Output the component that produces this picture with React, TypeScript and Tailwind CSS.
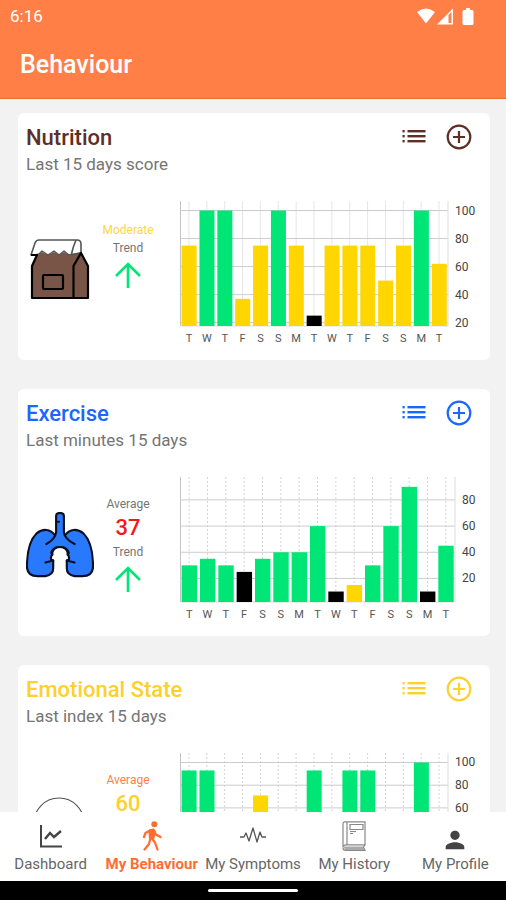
import type { ReactNode } from 'react'
import { MdPerson } from 'react-icons/md'

const GREEN = '#00e676'
const YELLOW = '#ffd600'
const BLACK = '#000000'

const DAYS = ['T', 'W', 'T', 'F', 'S', 'S', 'M', 'T', 'W', 'T', 'F', 'S', 'S', 'M', 'T']

type Bar = [value: number, color: string]

type ChartProps = {
  label: string
  bars: Bar[]
  ticks: number[]
  // value at the top and at the bottom of the plot
  max: number
  min: number
  plotWidth: number
  dashed?: boolean
}

const nutritionBars: Bar[] = [
  [75, YELLOW], [100, GREEN], [100, GREEN], [37, YELLOW], [75, YELLOW],
  [100, GREEN], [75, YELLOW], [25, BLACK], [75, YELLOW], [75, YELLOW],
  [75, YELLOW], [50, YELLOW], [75, YELLOW], [100, GREEN], [62, YELLOW],
]

const exerciseBars: Bar[] = [
  [30, GREEN], [35, GREEN], [30, GREEN], [25, BLACK], [35, GREEN],
  [40, GREEN], [40, GREEN], [60, GREEN], [10, BLACK], [15, YELLOW],
  [30, GREEN], [60, GREEN], [90, GREEN], [10, BLACK], [45, GREEN],
]

const emotionalBars: Bar[] = [
  [93, GREEN], [93, GREEN], [43, YELLOW], [29, BLACK], [71, YELLOW],
  [43, YELLOW], [29, BLACK], [93, GREEN], [50, YELLOW], [93, GREEN],
  [93, GREEN], [36, BLACK], [43, YELLOW], [100, GREEN], [50, YELLOW],
]

function BarChart({ label, bars, ticks, max, min, plotWidth, dashed }: ChartProps) {
  const left = 2
  const bottom = 125
  const step = plotWidth / bars.length
  const y = (value: number) => bottom - ((value - min) / (max - min)) * bottom

  return (
    <svg viewBox="0 0 304 144" role="img" aria-label={label} className="block w-full">
      {bars.map((_, i) => (
        <line
          key={i}
          x1={left + step * (i + 0.5)}
          x2={left + step * (i + 0.5)}
          y1={0}
          y2={bottom}
          stroke={dashed ? '#d4d4d4' : '#e6e6e6'}
          strokeDasharray={dashed ? '2 2' : undefined}
        />
      ))}
      {ticks.map((tick) => (
        <line key={tick} x1={left} x2={left + plotWidth} y1={y(tick)} y2={y(tick)} stroke="#cccccc" />
      ))}
      <line x1={left + 0.5} x2={left + 0.5} y1={0} y2={bottom} stroke="#c4c4c4" />
      <line x1={left + plotWidth} x2={left + plotWidth} y1={0} y2={bottom} stroke="#dddddd" />
      <line x1={left} x2={left + plotWidth} y1={bottom} y2={bottom} stroke="#dddddd" />
      {bars.map(([value, color], i) => (
        <rect
          key={i}
          x={left + step * i + step * 0.09}
          y={y(value)}
          width={step * 0.84}
          height={bottom - y(value)}
          fill={color}
        />
      ))}
      {DAYS.map((day, i) => (
        <text key={i} x={left + step * (i + 0.5)} y={141} fontSize={11} textAnchor="middle" fill="#555555">
          {day}
        </text>
      ))}
      {ticks.map((tick) => (
        <text key={tick} x={left + plotWidth + 7} y={y(tick) + 4} fontSize={12} fill="#444444">
          {tick}
        </text>
      ))}
    </svg>
  )
}

function ListIcon() {
  return (
    <svg viewBox="0 0 24 16" className="h-4 w-6" fill="currentColor" aria-hidden="true">
      {[1, 6, 11].map((top) => (
        <g key={top}>
          <rect x="0.5" y={top} width="2.2" height="2.4" />
          <rect x="5.5" y={top} width="18" height="2.4" />
        </g>
      ))}
    </svg>
  )
}

function AddIcon() {
  return (
    <svg viewBox="0 0 26 26" className="size-[26px]" fill="none" stroke="currentColor" strokeWidth="2.2" aria-hidden="true">
      <circle cx="13" cy="13" r="11.3" />
      <path d="M13 7v12M7 13h12" />
    </svg>
  )
}

function TrendUp() {
  return (
    <svg viewBox="0 0 26 26" className="mt-1.5 size-[26px]" fill="none" stroke={GREEN} strokeWidth="2.6" role="img" aria-label="Up">
      <path d="M13 26V2M1 14L13 2l12 12" />
    </svg>
  )
}

function LunchBagIcon() {
  return (
    <svg viewBox="0 0 68 68" className="w-full" strokeLinejoin="round" aria-hidden="true">
      <path d="M5 20L9 8q1-3 4-3h38q4 0 4 4v9l-10 2z" fill="#fff" stroke="#555" strokeWidth="1.6" />
      <path d="M50 5q-3 7-4.500 14" fill="none" stroke="#555" strokeWidth="1.6" />
      <path d="M11 20l5-3 6 3 6-3 5 3 5-3 5 3 11-2L62 31v32H6V31z" fill="#795548" />
      <path d="M9 20l4-1 3-3 6 4 6-4 5 4 5-4 5 4 11-2" fill="none" stroke="#555" strokeWidth="1.4" />
      <path d="M5 20h6L6 31v32h56V31l-7-13-7.500 13v32" fill="none" stroke="#000" strokeWidth="2.2" />
      <rect x="17" y="40" width="20" height="14" rx="1" fill="none" stroke="#000" strokeWidth="2.2" />
    </svg>
  )
}

function LungsIcon() {
  return (
    <svg viewBox="0 0 70 68" className="w-full" fill="#2979ff" stroke="#0b1020" strokeWidth="2.2" strokeLinejoin="round" strokeLinecap="round" aria-hidden="true">
      <path d="M30 24C25 17 17 17 11 22 3 30 1 42 1 56q0 10 11 10h8q8-1 8-8v-8l-2-1q-1-3 1-5l-1-2q1-5 9-7v-9z" />
      <path d="M40 24c5-7 13-7 19-2 8 8 10 20 10 34q0 10-11 10h-8q-8-1-8-8v-8l2-1q1-3-1-5l1-2q-1-5-9-7v-9z" />
      <path d="M31 4q0-3 4-3t4 3v16q0 8 11 13l-5-1q-4 5-10 3-6 2-10-3l-5 1q11-5 11-13z" stroke="none" />
      <path d="M31 21V4q0-3 4-3t4 3v17q1 7 11 12M31 21q-1 7-10 12M27 44q0-8 8-8t8 8M28 50l-8 2M42 50l8 2M33 10h1" fill="none" />
    </svg>
  )
}

function FaceIcon() {
  return (
    <svg viewBox="0 0 68 68" className="w-full" fill="none" stroke="#555" strokeWidth="1.2" aria-hidden="true">
      <circle cx="33" cy="36" r="25" />
      <path d="M23 46q10 8 20 0" />
      <circle cx="25" cy="34" r="2" />
      <circle cx="41" cy="34" r="2" />
    </svg>
  )
}

type CardProps = {
  title: string
  subtitle: string
  color: string
  icon: ReactNode
  stats: ReactNode
  chart: ReactNode
}

function BehaviourCard({ title, subtitle, color, icon, stats, chart }: CardProps) {
  return (
    <section className="shrink-0 rounded-md bg-white px-2 pt-[11px] pb-[15px]">
      <div className="flex items-start justify-between">
        <div>
          <h2 className={`text-[22px] leading-7 font-medium ${color}`}>{title}</h2>
          <p className="text-[17px] leading-6 text-[#757575]">{subtitle}</p>
        </div>
        <div className={`flex items-center gap-5 pr-2.5 ${color}`}>
          <button type="button" aria-label={`${title} entries`}>
            <ListIcon />
          </button>
          <button type="button" aria-label={`Add ${title}`}>
            <AddIcon />
          </button>
        </div>
      </div>
      <div className="mt-[25px] flex">
        <div className="mb-2 w-[68px] shrink-0 self-center">{icon}</div>
        <div className="flex w-[68px] shrink-0 flex-col items-center pt-[19px] text-xs text-[#757575]">{stats}</div>
        <div className="ml-4 min-w-0 flex-1">{chart}</div>
      </div>
    </section>
  )
}

function StatusBar() {
  return (
    <div className="flex h-8 items-center justify-between pr-8 pl-2.5">
      <span className="text-[17px] leading-6">6:16</span>
      <div className="flex items-center gap-0.5">
        <svg viewBox="0 0 18 16" className="h-4 w-[18px]" fill="currentColor" aria-hidden="true">
          <path d="M0 4Q9-3 18 4L9 15.500z" />
        </svg>
        <svg viewBox="0 0 17 17" className="size-[17px]" aria-hidden="true">
          <path d="M0 16.500L16 0.500v16z" fill="currentColor" />
          <path d="M11.500 7l3-3v11h-3z" fill="#ff7f47" />
        </svg>
        <svg viewBox="0 0 12 17" className="ml-1.5 h-[17px] w-3" fill="currentColor" aria-hidden="true">
          <path d="M4 0h4v2h2q1.500 0 1.500 1.500v12q0 1.500-1.500 1.500H2Q.5 17 .5 15.500v-12Q.5 2 2 2h2z" />
        </svg>
      </div>
    </div>
  )
}

const navItems = [
  {
    label: 'Dashboard',
    icon: (
      <svg viewBox="0 0 24 24" className="size-6" fill="none" stroke="#444" strokeWidth="2" aria-hidden="true">
        <path d="M2 1v21.500h21" />
        <path d="M6 15l5-6 4 4 7-6" strokeWidth="2.400" />
      </svg>
    ),
  },
  {
    label: 'My Behaviour',
    active: true,
    icon: (
      <svg viewBox="0 0 20 30" className="h-[30px] w-5" fill="none" stroke="currentColor" strokeWidth="2.2" strokeLinecap="round" strokeLinejoin="round" aria-hidden="true">
        <circle cx="12.300" cy="3.300" r="3" fill="currentColor" stroke="none" />
        <path d="M7.500 9.500l4-1 1.500 3-2 6.500-3-1z" fill="currentColor" />
        <path d="M8 9.500l-4.500 2.500-1.500 4M12 10l2 3.500 4.500 2.500M8.500 17L7 23l-4.500 5.500M10 17.500l3 4 2.500 7" />
      </svg>
    ),
  },
  {
    label: 'My Symptoms',
    icon: (
      <svg viewBox="0 0 26 20" className="h-5 w-[26px]" fill="none" stroke="#555" strokeWidth="1.3" strokeLinejoin="round" aria-hidden="true">
        <path d="M0 11h4l2-4 3 8 4-13 4 14 3-10 2 5h4" />
      </svg>
    ),
  },
  {
    label: 'My History',
    icon: (
      <svg viewBox="0 0 24 30" className="h-[30px] w-6" fill="none" stroke="#888" strokeWidth="1.2" aria-hidden="true">
        <path d="M3 .8h20v23H4q-3 0-3 3V3Q1 .8 3 .8zM5 1v23M1 27q0 2.300 3 2.300h19l-1.500-3 1.500-2.500" />
        <path d="M2 26.500h19M3 28h19" strokeWidth="1.800" stroke="#aaa" />
        <path d="M8 3.500h13v5H8zM8 10.500h6M8 12.500h3" />
      </svg>
    ),
  },
  { label: 'My Profile', icon: <MdPerson className="mt-2 size-7 text-[#444]" /> },
]

export default function App() {
  return (
    <div className="flex h-screen flex-col bg-[#f2f2f2] font-[Roboto,'Liberation_Sans',sans-serif]">
      <header className="shrink-0 border-b border-[#f07030] bg-[#ff7f47] text-white">
        <StatusBar />
        <h1 className="px-5 pt-[17px] pb-[17px] text-[25px] leading-8 font-medium">Behaviour</h1>
      </header>

      <main className="flex min-h-0 flex-1 flex-col gap-[29px] overflow-hidden pt-3.5 pr-4 pl-[18px]">
        <BehaviourCard
          title="Nutrition"
          subtitle="Last 15 days score"
          color="text-[#5d2f26]"
          icon={<LunchBagIcon />}
          stats={
            <>
              <span className="leading-5 text-[#ffd740]">Moderate</span>
              <span className="leading-4">Trend</span>
              <TrendUp />
            </>
          }
          chart={
            <BarChart
              label="Nutrition score by day"
              bars={nutritionBars}
              ticks={[100, 80, 60, 40, 20]}
              max={106.8}
              min={17.6}
              plotWidth={268}
            />
          }
        />
        <BehaviourCard
          title="Exercise"
          subtitle="Last minutes 15 days"
          color="text-[#1a66ff]"
          icon={<LungsIcon />}
          stats={
            <>
              <span className="leading-4">Average</span>
              <span className="text-[22px] leading-8 font-medium text-[#f01818]">37</span>
              <span className="leading-4">Trend</span>
              <TrendUp />
            </>
          }
          chart={
            <BarChart
              label="Exercise minutes by day"
              bars={exerciseBars}
              ticks={[80, 60, 40, 20]}
              max={97.5}
              min={2}
              plotWidth={275}
              dashed
            />
          }
        />
        <BehaviourCard
          title="Emotional State"
          subtitle="Last index 15 days"
          color="text-[#fdd02c]"
          icon={<FaceIcon />}
          stats={
            <>
              <span className="leading-4 text-[#ff7f47]">Average</span>
              <span className="text-[22px] leading-8 font-medium text-[#fdd02c]">60</span>
              <span className="leading-4">Trend</span>
              <TrendUp />
            </>
          }
          chart={
            <BarChart
              label="Emotional index by day"
              bars={emotionalBars}
              ticks={[100, 80, 60, 40, 20, 0]}
              max={100 + 9.5 / 1.135}
              min={-1.8}
              plotWidth={268}
              dashed
            />
          }
        />
      </main>

      <nav className="grid shrink-0 grid-cols-5 bg-white pt-2 pb-[5px]">
        {navItems.map(({ label, icon, active }) => (
          <a
            key={label}
            href="#"
            aria-current={active ? 'page' : undefined}
            className={`flex flex-col items-center whitespace-nowrap text-[15px] ${
              active ? 'font-bold text-[#ff6d2e]' : 'text-[#666666]'
            }`}
          >
            <span className="flex h-8 items-center">{icon}</span>
            <span className="leading-6">{label}</span>
          </a>
        ))}
      </nav>
      <div className="flex h-[19px] shrink-0 items-center justify-center bg-black">
        <div className="h-[3px] w-[90px] rounded-full bg-white" />
      </div>
    </div>
  )
}
